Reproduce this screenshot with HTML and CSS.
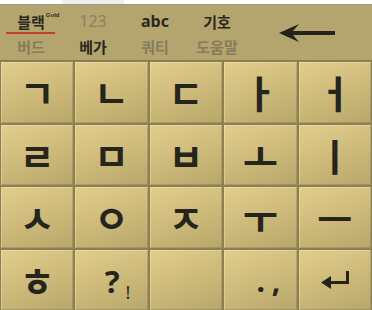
FILE: index.html
```html
<!DOCTYPE html>
<html lang="ko">
<head>
<meta charset="utf-8">
<link rel="stylesheet" href="styles.css">
</head>
<body>
<div class="screen">
  <div class="topstrip"><div class="tab"></div></div>
  <div class="bar">
    <div class="mode">
      <div class="line dark"><span class="sel">블랙<span class="gold">Gold</span></span></div>
      <div class="line gray">버드</div>
    </div>
    <div class="mode">
      <div class="line gray latin">123</div>
      <div class="line dark">베가</div>
    </div>
    <div class="mode">
      <div class="line dark latin">abc</div>
      <div class="line gray">쿼티</div>
    </div>
    <div class="mode">
      <div class="line dark">기호</div>
      <div class="line gray">도움말</div>
    </div>
    <div class="back">
      <svg width="60" height="22" viewBox="0 0 60 22">
        <path d="M2 11 L22 2 L16 9 L58 9 L58 13 L16 13 L22 20 Z" fill="#24231c"/>
      </svg>
    </div>
  </div>
  <div class="keys">
    <div class="key">ㄱ</div>
    <div class="key">ㄴ</div>
    <div class="key">ㄷ</div>
    <div class="key">ㅏ</div>
    <div class="key">ㅓ</div>
    <div class="key">ㄹ</div>
    <div class="key">ㅁ</div>
    <div class="key">ㅂ</div>
    <div class="key">ㅗ</div>
    <div class="key">ㅣ</div>
    <div class="key">ㅅ</div>
    <div class="key">ㅇ</div>
    <div class="key">ㅈ</div>
    <div class="key">ㅜ</div>
    <div class="key">ㅡ</div>
    <div class="key">ㅎ</div>
    <div class="key punct"><span class="q">?</span><span class="ex">!</span></div>
    <div class="key"></div>
    <div class="key punct"><span class="dot">.</span><span class="comma">,</span></div>
    <div class="key">
      <svg width="30" height="20" viewBox="0 0 30 20">
        <path d="M26 1 L29 1 L29 14 L11 14 L11 19 L1 12.5 L11 6 L11 11 L26 11 Z" fill="#24231c"/>
      </svg>
    </div>
  </div>
</div>
</body>
</html>
```
FILE: styles.css
```css
* { box-sizing: border-box; }
html, body { margin: 0; padding: 0; background: #ffffff; }
.screen {
  width: 372px;
  height: 310px;
  overflow: hidden;
  display: flex;
  flex-direction: column;
  font-family: "Noto Sans CJK KR", "Noto Sans", sans-serif;
}
.topstrip {
  height: 5px;
  background: #ffffff;
  border-bottom: 1px solid #a09a88;
  display: flex;
}
.tab {
  margin-left: 62px;
  width: 62px;
  height: 4px;
  background: #efefef;
}
.bar {
  height: 56px;
  background: #b4a46e;
  border-bottom: 1px solid #8a7c4c;
  display: grid;
  grid-template-columns: 62px 62px 62px 62px 1fr;
  align-items: stretch;
}
.mode {
  display: flex;
  flex-direction: column;
  align-items: center;
  padding-top: 4px;
}
.line {
  height: 25px;
  line-height: 25px;
  font-size: 15px;
  font-weight: 700;
  white-space: nowrap;
}
.line.latin { font-family: "Noto Sans", sans-serif; font-size: 16px; }
.dark { color: #2a281e; }
.gray { color: #857c5c; }
.gray.latin { font-weight: 400; color: #8b8266; }
.sel {
  position: relative;
  display: inline-block;
  line-height: 25px;
}
.sel::after {
  content: "";
  position: absolute;
  left: -11px;
  right: -10px;
  bottom: 0;
  height: 2px;
  background: #c53c32;
}
.gold {
  position: absolute;
  top: 3px;
  left: 100%;
  margin-left: 1px;
  font-size: 6px;
  line-height: 7px;
  font-family: "Liberation Sans", sans-serif;
  font-weight: 700;
  color: #2e2c22;
}
.back {
  display: flex;
  align-items: center;
  justify-content: center;
  padding-right: 6px;
}
.keys {
  flex: 1;
  background: #8e7f4f;
  display: grid;
  grid-template-columns: repeat(5, 1fr);
  grid-template-rows: repeat(4, 1fr);
  gap: 2px;
  padding: 1px 1px 0 1px;
}
.key {
  background: linear-gradient(160deg, #e2cd8c 0%, #cebb7b 50%, #b7a76a 100%);
  box-shadow: inset 1px 1px 0 rgba(255,255,255,0.25), inset -1px -1px 0 rgba(0,0,0,0.12);
  display: flex;
  align-items: center;
  justify-content: center;
  font-size: 38px;
  font-weight: 700;
  color: #26251d;
  line-height: 1;
}
.punct { align-items: baseline; padding-top: 16px; font-family: "Noto Sans", sans-serif; }
.q { font-size: 31px; margin-left: 12px; }
.ex { font-size: 18px; margin-left: 6px; position: relative; top: 6px; font-weight: 400; }
.dot { font-size: 30px; margin-left: 16px; }
.comma { font-size: 30px; margin-left: 7px; }
```
